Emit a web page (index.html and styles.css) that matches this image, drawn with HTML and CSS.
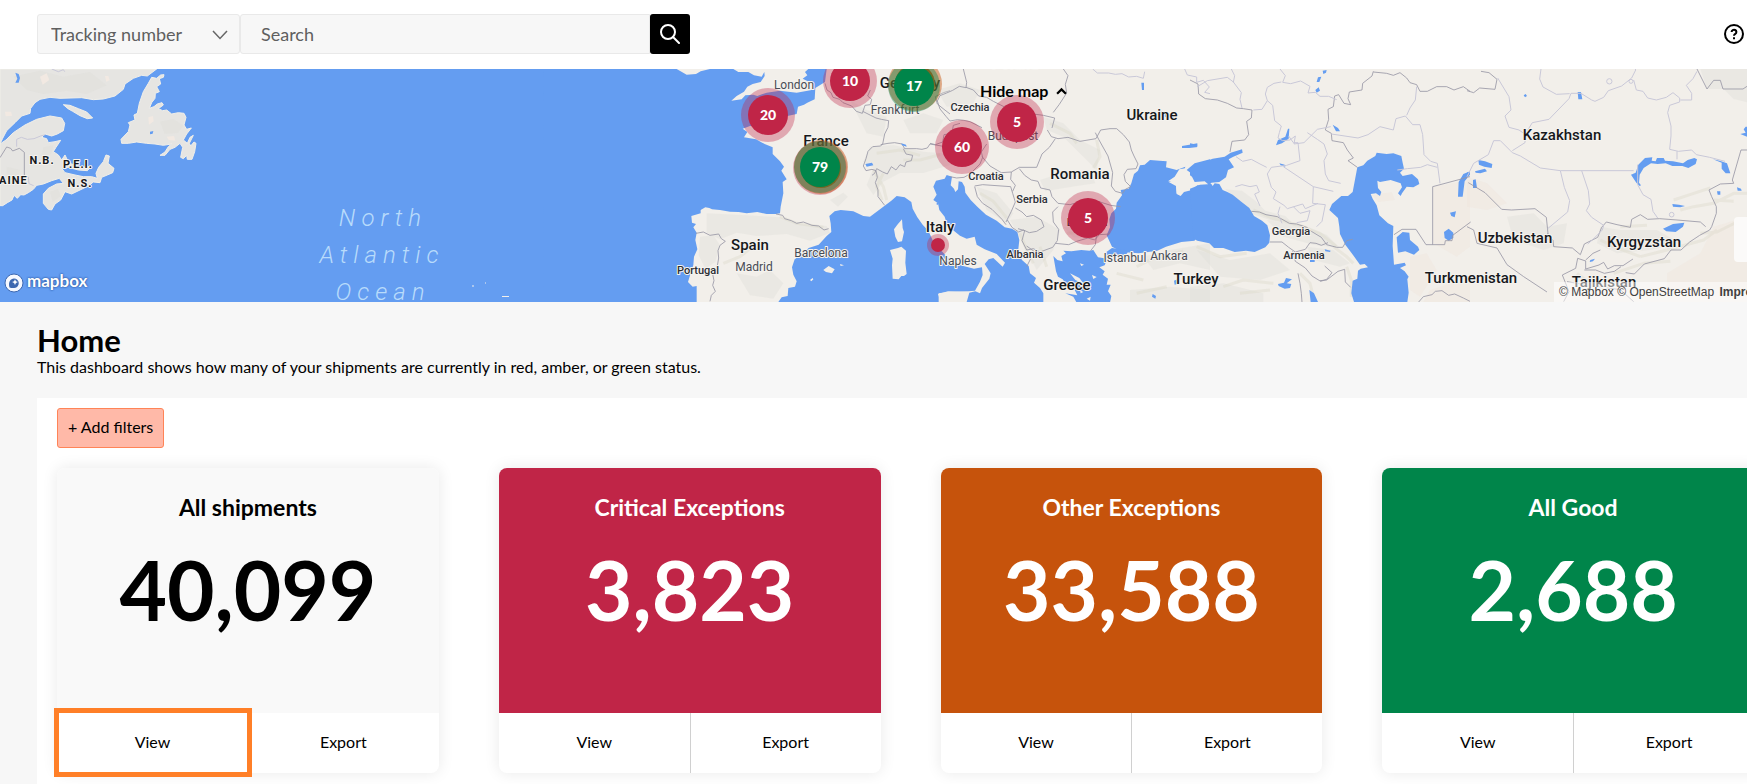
FILE: index.html
```html
<!DOCTYPE html>
<html lang="en">
<head>
<meta charset="utf-8">
<title>Home</title>
<link rel="stylesheet" href="styles.css">
</head>
<body>
<header class="topbar">
  <form class="search" role="search">
    <div class="search-type">
      <select class="search-select" aria-label="Search by">
        <option>Tracking number</option>
      </select>
      <svg class="search-chevron" viewBox="0 0 16 10" aria-hidden="true"><path d="M1 1l7 7.500 7-7.500"/></svg>
    </div>
    <input class="search-input" type="text" placeholder="Search" aria-label="Search">
    <button class="search-button" type="button" aria-label="Search">
      <svg viewBox="0 0 20 20" aria-hidden="true"><circle cx="8" cy="8" r="7"/><path d="M13 13l6 6"/></svg>
    </button>
  </form>
  <button class="help" type="button" aria-label="Help">
    <svg viewBox="0 0 20 20" aria-hidden="true"><circle cx="10" cy="10" r="9"/><path d="M7.600 8a2.400 2.200 0 1 1 3.700 1.800c-.9.600-1.300.9-1.300 1.900"/><path d="M10 13.300v1.900"/></svg>
  </button>
</header>

<section class="map" aria-label="Shipment map">
  <svg class="map-canvas" viewBox="0 0 1747 233" preserveAspectRatio="xMidYMid slice">
    <rect class="water" width="1747" height="233"/>

    <!-- Eastern Canada and Maine -->
    <g transform="translate(0 -9) scale(.33333)">
      <path class="land-cool" d="M0 27H470L442 48 425 46 400 55 375 72 370 88 345 108 310 117 280 119 245 113 180 115 150 112 120 118 105 128 92 145 90 160 65 168 45 188 20 212 8 235 0 252 18 240 40 218 75 195 110 178 150 168 185 174 194 190 190 212 172 222 155 228 135 222 125 232 140 236 145 248 165 245 182 241 168 262 160 275 175 285 185 300 195 285 203 302 215 312 250 322 275 318 262 332 235 330 205 322 185 325 195 338 225 345 250 350 275 350 292 355 288 340 296 322 310 305 318 285 328 288 324 310 342 325 338 338 322 345 305 352 300 368 280 366 265 378 240 390 215 402 195 395 182 420 165 432 155 450 145 448 130 430 130 402 145 385 170 372 190 370 178 355 155 362 130 372 110 376 100 388 85 398 72 405 62 404 52 415 42 406 36 420 22 428 8 437 0 437Z"/>
      <path class="land-cool" d="M190 134L210 136 235 146 260 156 278 174 262 176 240 167 218 154 204 146ZM470 55L482 45 492 44 490 52 478 56 482 72 470 80 478 95 466 100 465 115 455 128 448 145 462 140 472 132 486 128 490 135 475 146 488 152 500 150 515 162 535 158 552 160 558 172 552 195 560 208 574 204 560 222 550 240 562 250 570 232 580 226 568 250 572 258 582 246 588 250 584 275 576 298 562 298 560 286 550 296 542 292 548 262 540 250 525 262 510 268 495 286 480 286 495 276 505 260 515 252 490 256 465 252 440 250 410 246 385 250 365 250 363 238 385 215 390 195 385 188 405 180 402 165 412 160 418 130 430 95 445 70 455 52Z"/>
      <path class="shade" d="M40 50l80-18 70 18 80-14 50 40-60 26-60-10-70 10-50-12zM480 185l40-8 30 20-16 22-40 2zM150 395l24-8 8 22-24 16zM130 262l30-6-6 26-30 8zM20 320l40 10-6 40-34 6z"/>
      <path class="warm" d="M120 50l20-10 8 20-20 14zM445 172l14-4 2 16-14 10zM15 155l18 0 4 12-20 2zM315 48l10 0 4 12-10 6zM500 230l22-2 4 14-20-2z"/>
      <path class="border-soft" d="M155 27l20 8 15-6 4 6M50 260v-22l14-6 18 6 20-2 20-8 14-4M73 345l12 6 2 20 14 6"/>
      <path class="border" d="M0 293l20-32 12 4 6 8 20-8 15 12v68"/>
      <path class="water" d="M46 38l10 4 4 12-4 14-10 0 6-12zM450 215l10-2-2 8-8 2z"/>
    </g>

    <!-- Azores -->
    <path class="isle" d="M472 217h2M485 214h1M502 227.500h7"/>

    <!-- Europe and Asia -->
    <rect class="land" x="676" width="1071" height="233"/>
    <g transform="translate(670 -9) scale(.33333)">
      <path class="shade" d="M110 460l90 4 130 8 60 20 80 6 10 20-60 24-70-20-90 6-60-10-50 20-40-20zM90 530l40-4 20 30-14 50-30 20-20-40zM200 640l60 10 40-20 40 40-30 46-70-10zM480 420l40-22 14 12-30 30zM600 260l70-5 90 20 80 6v34l-80 24-70 0-50 26-30 40-20-30 20-50-30-20zM540 120l50 30 60 20-10 60-50-10zM690 560l18 10-4 60-20 0zM700 180l60-20 60 20-20 40-80 0z"/>
      <path class="relief" d="M330 470l50 20 80 12M610 330l30 50 10 40M620 280l70-10 60 16M160 610l50-20 30-24M640 340l-20 40 16 40M700 300l50 0 60-16"/>
      <path class="water" d="M-380 27H20L50 44 78 42 92 34 120 27H190L205 36 235 36 252 46 275 50 283 36 284 48 272 66 248 72 232 80 222 95 200 108 184 122 215 118 226 106 250 104 262 108 290 98 330 92 380 98 425 90 432 74 418 66 398 56 412 46 405 36 415 27H470L465 66 436 84 434 118 412 128 402 134 384 140 380 162 352 168 330 170 340 188 296 196 240 198 218 206 232 216 222 232 258 238 284 252 308 262 308 282 330 304 342 320 334 332 350 358 338 366 340 400 332 440 330 460 318 462 290 462 262 456 230 460 206 456 180 455 150 450 126 448 118 444 106 442 92 450 92 460 64 468 66 488 78 492 70 502 80 518 76 540 82 568 72 590 70 615 62 640 54 666 68 680 80 678 80 726H-380Z"/>
      <path class="water" d="M325 726L335 712 353 708 355 684 375 680 380 664 370 644 366 622 374 598 400 580 416 564 446 554 470 528 484 516 482 490 478 468 494 454 512 450 550 454 580 468 600 470 616 458 640 440 664 422 680 408 704 412 724 426 728 446 742 472 758 494 775 512 790 545 812 570 840 600 880 618 912 626 936 622 938 645 930 665 915 692 895 694 840 695 806 700 806 726Z"/>
      <path class="land" d="M696 478l2 26 4 12-6 28-12 2-8-16-4-22 10-14zM694 560l14 12-2 36 4 34-8 6-8 0-8 10-18-2-2-40 2-20-8-26 24-6zM460 630l16-12 18 10-8 12-18-4zM420 660l8-6 2 4-6 6zM510 612l12 4-10 2zM804 702l30-8 60 2-4 30H812Z"/>
      <path class="border" d="M318 462l20 4 6 10 20 6 16 8 20-4 26 10 20 2 16 12 14-4M78 520l22-4 20 10 26-4 8 14 12 8-16 12-6 16 2 22-6 36-12 12 4 20-4 14 8 18-12 12-4 18M465 70l6 20 12 8 6 14 20 6 10 10 26 10 14 16 18 6 8-24 16-2 4-16-12-10 8-18M578 154l16 8 24 12 16 4 22 4-2 20-10 20-6 30-6 6-24 2-14 14-6 22-8 22 8 14 18-4 12 4 4 20-6 16 8 22 0 20 20 26M632 254l22-4 20-2 22 4 8 14 36 0 16 2 16-4 8-12 46 8M700 266l8 16 20 4-4 16-16 4-4 14-14-6-12 16-14-10-12 22-14-6-18-10-6 14-8 6M840 92l-20 6-24 12 6 22 20 16 18 14"/>
      <path class="water" d="M586 312l20-4 4 8-20 4zM694 250l14 4 2 6-14-4zM800 428h4v6h-4z"/>
    </g>

    <g transform="translate(930 -9) scale(.33333)">
      <path class="shade" d="M340 170l60 20 50 50 60 30-10 60-40-40-60-60-50-20zM330 360l60-20 90-10 16 40-70 10-80 14zM140 380l60 20 50 60-20 30-60-40zM240 480l80-10 70 40-20 60-50 60-30-60zM400 500l70 10 40-10-20 36-60-4zM20 90l70-20 60 20-20 40-80 10zM640 590l80-20 120-20v80l-90-20-80 20zM600 690l120-10 120 10v36H600z"/>
      <path class="relief" d="M360 190l60 30 20 30M500 240l10 50-20 34M150 400l40 24 40 50M270 520l20 50 20 40M330 560l20 60M410 520l70-4M620 620l60-30 80-16M560 640l80 20M620 700l90-20"/>
      <path class="water" d="M90 527L64 506 50 490 44 470 28 450 24 430 10 420 20 404 10 380 18 362 44 356 50 345 66 350 62 376 72 386 76 396 84 388 86 364 96 366 104 380 106 398 122 420 142 440 168 464 200 482 224 502 246 506 262 516 268 540 264 576 276 600 296 618 300 640 318 654 312 668 330 684 340 700 340 726H110L118 698 136 694 150 700 156 684 178 656 182 640 164 612 176 598 190 594 218 620 225 608 200 582 164 568 140 554 134 530 110 536Z"/>
      <path class="water" d="M370 588l12 12 16 4-4-16 14-8-8-8 24 2 30-4 24 2 12-2 14 22 28 4-8 20-16 6 16 12-6 10 16 12-4 18 12 0-8 20 10 14-4 20H440l-10-18-24-10 36 6-12-24-22-10-10-14-14-8-6-16z"/>
      <path class="land" d="M420 640l28 14 14 18-26-12zM450 610l12 4-8 4zM486 645l14 6-10 6zM450 690l10 6-8 4zM470 716l12-6-2 12z"/>
      <path class="water" d="M840 378l-38-2-16 14-24 6-10 12-12-6-2-24-22-12 22-8 24-24 4-14-26 10-32-8 2-18-22-2-28-2-16 14-14 2-6 16-12 10-8 28-8 16-24 4 4 16-16 22-2 18-14 14-6 18 2 24-10 24 16 34 30 16 50 4 56-8 26-12 46-14 40-4z"/>
      <path class="land" d="M714 364l20-14 14-22 22-4 8 14 16 8 2 22-12 12-26 10-8 16-10-6-2-30-10-6z"/>
      <path class="water" d="M526 578l20-14 26 4 24 4-8 12-30 6-22 0zM770 330l24-20 46-12v48l-20 12-28-12zM634 68h8v22h-6zM688 152l20 4 24 16-4 6-20-6-18-10zM756 258l22-4 24-4v10l-24 4-22 0zM668 702l10 6-2 8-10-6zM732 662l10-4 0 14-8 2z"/>
      <path class="border" d="M100 27l10 40-2 16-20-4-20 12-18 8-20 8-8 16 8 24 18 22 12 14 22-4 20 2 18 4 36 18M108 82l22 8 16 18 24 4 20 12 60 30 90 12 34 8-8 30M400 27l14 20-8 26 4 26-22 34-18 24M0 250l16 4 22-8 4-22 24-4 4-24 20-6M60 350l20 4 22-2 18-10 30-30 8-20-4-16 16-24M156 290l24 28 34 20 30-2 24-14 52 0 16-40 22-20 18-26M352 210l12 20 20 6 30-4 36 12 48-8 14-26 28-4 20 0 20 18 18 22 6 24 8 18 12 24-6 14-26 2-10 16 4 20 16 16-16 8-8 12-22-6-12-16 4-40-14-50-28-50-10-20M134 378l24-4 84 6 6 20 8 26-12 28-16 32M134 380l8 30 16 20 28 18 30 30 12 16M244 336l-2 22 14 18-8 18M268 326l16 20 20 14 20 4 8 20 28 6 6 20 18 20 36 4 20-6M256 444l20 12 14 14 20-4 24 14 8 20-22 14-22 4-18-8-14 6-20-14-14-22M384 440l-16 16 2 30 16 22-4 34-14 20-38 14-20-10-20 4-14-28 8-30-20-6M376 550l40 4 24-10 34-10 20 6 14-16 32-2M500 524l-4 30-14 18M290 620l12-24 10-22-22-16M436 432l36 8 32-16 38 12 30 4"/>
      <path class="border-soft" d="M488 27l14 12 34 0 20 4 20-2 20 10 24-2 20 6 4-20M764 27l8 18 28 6 0 16 20-6 18 20-14 16 16 4"/>
    </g>

    <g transform="translate(1190 -9) scale(.33333)">
      <path class="warm-soft" d="M730 380l110-20v200l-40 30-70-40zM660 590l50-10 30 50-50 80-30-20zM545 406l60-10 10 24-50 6zM720 690l120-40v76H700z"/>
      <path class="shade" d="M106 388l50 4 40 30 30 30 60 16 20 20-60-6-60-20-40-40zM230 480l100 14 80 30 40 40-80-10-90-24zM20 570l100 30 120-20 60 50-90 30-120-10zM350 560l80 10 50 40-30 10-80-20zM0 680l100-10 120 30v26H0z"/>
      <path class="relief" d="M190 450l60 26 80 20 60 24 50 40M250 470l70 26M430 560l40 30 20 20M20 560l70 30 80-10M100 680l60-20 90 10M330 640l30 30 10 40M470 620l14 40 0 50M150 700l90-10"/>
      <path class="water" d="M0 328l34-20 34-12 36-6 18-12 34-10 2 10-28 12-14 8 16 24-18 8-6 22-20 14-24 2-6 8-14-12-30 2-8-16-6-4zM0 386l30-12 34-2 4 6 6-8 14 2 10 18 14 6 16 8 24 20 26 20 14 24 24 14 16 14 8 30-2 22-12 14-32 14-26-4-34 4-34-12-28 0-14-14-36-8-12-6z"/>
      <path class="water" d="M502 322l18-6 12-14 24-14 4-10 30 4 20-2 24 8 4 20 4 18-12 12 8 10 28-6 18 16 4 14-18 10-20-2-14 20-4 8-8-8 12-18-4-12-30-10-32 6-8-4 2 22 10 12-4 12-12-8-16 2 6 14 12 20 8 30 26 24 16 8-2 60 4 56 32-6 4 8-18 8 14 10 12 16-4 8 4 40-4 28H492l-8-26 4-38 14-6 2-24 8-6 22-4-10-10-14 2-26-36-18-24-16-32-2-22-4-26-26-24 8-18 14-12 14-12 20 0 14-12zM620 532l18-16 20 2 2 22 24 20 4 10-16 14-26-10-22 4z"/>
      <path class="water" d="M264 240l22-10 8-24h4l-2 30-20 14-18 6zM268 310l16 4 2 6-14-4zM428 194l16 10 6 10-12 0zM384 52l10-2-6 16-8 0zM398 32l12-2-2 8-8 4zM376 90l10-8 4 10-10 6zM0 250l22 4-2 8-20 0zM264 672l18-4 6-14 18 4-16 12 14 2-4 12-16 2-18-8zM358 690l14 10 12 26-22 0zM360 600h14v6h-14zM404 568l18 4-2 4-14-2zM804 410l2-44 14-24 20-8v10l-16 20-6 46zM780 458l18-4-4 18-10-4zM762 516l14-10 14 12 0 16-14 8-12-8z"/>
      <path class="border" d="M0 60l24 12 2 30 20 14 36 4 30 10 28 14 20 2 26 4-2 24-14 10 6 40-12 16-38 4-6 32M550 34l-4 14-28 22-2 20-38 6-4 20 8 18-20-4-16-26-12 4-4 32-16 8 2 30-10 32 18 10 2 22 34 6 12 22 18 24-16 8 28 20M550 36l40 4 20 6 20-8 20 16 10 14 20 6 10 20 22 0 28-14 30 0 22 10 28-10 20 14M184 454l24 2 20 8 34 6 36 20 22 2 30 10 14 12 30 18 16 22 30 8 18 0 12-20 18-4M240 546l36 0 20 16 20 14 30-8 14-20 18 2 16 6 20-8M308 574l8 30 30 20 20 24 26 16 18-6 16-20-22-20M324 640l6 30 4 30 2 26M390 662l20-2 34-26 20-6 2 38 16 16M728 380v174M728 380l112-30M612 524l24-16 42 0 30 46 56 0 2-12 20 0 2-16 54-40M686 726l14-16 26-6 10-10 20-2 20 14 18-4 26 12 20 10"/>
      <path class="border-soft" d="M22 80l30-18 60-10 18 14 24 32-4 20 6 26M124 27l10 20-4 20M190 150l26-2 16-26-6-20 6-20 20-12 22-4M270 27l16 20-8 20 24 4 30-8 28 16-6 20 22-2 14 12 26 0 24 10M232 122l16 14 6 46 20 16-6 20-4 16 14 8 22-2 16-12-4 24 30-4 40-40 40-8M296 228l14 20 14 0 6 54-40 14-46 6-12 20 12 40 14 14-8 20 32 20 10 10 46-14 8 14 38-16M352 218l30 20 20 14 10 30-10 20 4 40 10 20 36 8M138 290l20 14 26-6 26 14 20 10M280 320l90 60 60 14M370 380l-2 50 38 4-10 50-16 16M136 380l20-6 24 6 20-4 8 20-14 6 16 36M270 440l-6 20 12 30M310 440l20 20 30-8-8 30-32 6M424 222l80 12 30-10 36-24 40 10 8-34 28-8 22 26 22 0 8 30 4 60 20 20 20 6 8 60M622 330l30-4 40-4 20-8 30 8M680 80l-4 40-16 24-10 22"/>
    </g>

    <g transform="translate(1467 -69) scale(.33333)">
      <path class="shade" d="M700 207h140v100l-40-10-30-30-50 0zM120 650l80-10 40 40 60-10-10 60-60 20-90-30zM400 680l60 10 110 0 70 40-90 20-100 10-60-30z"/>
      <path class="warm-soft" d="M0 530l60 20 60 60-60 20-60-10zM740 680l100-30v220l-240 0 0-50 100-60z"/>
      <path class="relief" d="M640 630l40-10 60-10 60-30 40 0M620 600l60-20 50-16M400 720l40 20 80 30M520 770l80-20 110-30 40-30M440 820l90-30 80-6M330 820l40 30 40 14M700 700l50-4 60-30M460 680l80-4M740 600l60 4"/>
      <path class="water" d="M492 524l14-6 8-24 20-20 22-2-2 10 12 2 4-10 20 0 4 8 24 2 30 6 14-10 20-6 8 4-4 14-22 12-18-6-30 0-20-8-24 2-20-2-22 14-12 20-2 24 6 8-4 2-10-10zM588 686l30-14 34-4-4 12-22 16-28-2zM738 478l20 4 22 8 10 30-14 0-12-14 0-18zM332 276h10l4 22-12 0zM170 286l6-4 4 6-6 4zM616 612l20 2 18 4-14 4-22-2zM34 480l20 4 22 8-2 12-22-4-16-6zM24 514l30-8 6 8-20 6-14-2zM18 540l8-2 4 26-12 0zM0 516l6 0-2 6zM836 380l4 0v30l-20-8 16-4-6-10zM750 574h10v10h-8zM810 562l12 4 2 6-12 0zM370 780l14-4-6 8-10 2z"/>
      <path class="border" d="M0 272l20 6 18-14 46 4 6-30-24-20-24-4M690 207l30 60 20-26 20 0 8 26 60 0 12-8M840 450l-18 0-26 90 4 10-40 2-34 18 8 20 14 30 0 20-14 40-6 10-30 16-30 20-26 24-30 0-20 26-60 16-30 30-26-4M716 680l-16-14-70-6-52-4-36 2-22-14-26 14-4 24-40-8-32-8-14 16-12 30-40 20-12 32-24-20-56-4-2-20-14-10-6-58-34-26-70 4-30-2-50-50-50-30M242 700v20M0 680l20 10 10 40 60 14 30 50 50 36 70 46M290 905l16-30-20-50 40-20 6-30 24 8 0 24 40-12 14-8 12 20 20-10 26 0 30-20M352 810l34 0 26 10 30-6 20-14M356 780l22-20 22-10M300 845l60 10 100 14 40 36"/>
      <path class="border-soft" d="M0 530l20-40 44-26 16-42 20 0 30 30 6 6 24 10 60 36 60 8H500M136 452l38-24 2-24-20-14-30-8-12-34 18-18-6-40-34-56M176 400l20-32 50-10 60-62 6-16 30 0 32 20 10 4 26-12 14-20 40-14 30-24 12-24-4-10M222 207l-4 30 10 24 40 22 40-2M500 240l8 30 20 4 14 20 26 6 30-8 20-14 20 16 0 12-30 10-6 22 10 40 0 30-4 40 26 6 40-4 14 14 40 8 46 12M640 300l34 0 0-20-16-24 20-20 12-22M630 454v24M280 512l12 50 16 40-6 34-60 50M344 512l20 60 4 40-10 20 16 20 36 24-4 14-30 30-14 12M512 494l0 60 16 30 24 14 6 36 14 20"/>
      <circle class="border-soft" cx="427" cy="244" r="8"/><circle class="border-soft" cx="492" cy="244" r="6"/><circle class="border-soft" cx="614" cy="644" r="7"/>
    </g>

    <g class="label-ocean">
      <text x="383" y="157">North</text><text x="382" y="194">Atlantic</text><text x="383" y="231">Ocean</text>
    </g>
    <g class="label-province">
      <text x="42" y="95">N.B.</text><text x="78" y="99">P.E.I.</text><text x="80" y="118">N.S.</text><text x="8" y="115">MAINE</text>
    </g>
    <g class="label-city">
      <text x="794" y="20">London</text><text x="895" y="45">Frankfurt</text><text x="821" y="188">Barcelona</text><text x="754" y="202">Madrid</text><text x="958" y="196">Naples</text><text x="1013" y="71">Budapest</text><text x="1125" y="193">Istanbul</text><text x="1169" y="191">Ankara</text>
    </g>
    <g class="label-small">
      <text x="698" y="205">Portugal</text><text x="970" y="42">Czechia</text><text x="986" y="111">Croatia</text><text x="1032" y="134">Serbia</text><text x="1087" y="157">Bulgaria</text><text x="1025" y="189">Albania</text><text x="1291" y="166">Georgia</text><text x="1304" y="190">Armenia</text>
    </g>
    <g class="label-country">
      <text x="910" y="19">Germany</text><text x="826" y="77">France</text><text x="750" y="181">Spain</text><text x="940" y="163">Italy</text><text x="1015" y="0">Poland</text><text x="1152" y="51">Ukraine</text><text x="1080" y="110">Romania</text><text x="1067" y="221">Greece</text><text x="1196" y="215">Turkey</text><text x="1471" y="214">Turkmenistan</text><text x="1562" y="71">Kazakhstan</text><text x="1515" y="174">Uzbekistan</text><text x="1644" y="178">Kyrgyzstan</text><text x="1604" y="218">Tajikistan</text>
    </g>

    <g class="pins">
      <circle class="halo-red" cx="768" cy="46" r="27"/><circle class="red" cx="768" cy="46" r="20"/><text x="768" y="51">20</text>
      <circle class="halo-red" cx="850" cy="12" r="27"/><circle class="red" cx="850" cy="12" r="20"/><text x="850" y="17">10</text>
      <circle class="halo-amber" cx="915" cy="15" r="27"/><circle class="amber" cx="915" cy="15" r="20"/><circle class="halo-green" cx="914" cy="17" r="26"/><circle class="green" cx="914" cy="17" r="20"/><text x="914" y="22">17</text>
      <circle class="halo-red" cx="820" cy="99" r="27"/><circle class="halo-amber" cx="821" cy="98" r="27"/><circle class="amber" cx="821" cy="99" r="20"/><circle class="halo-green" cx="820" cy="98" r="26"/><circle class="green" cx="820" cy="98" r="20"/><text x="820" y="103">79</text>
      <circle class="halo-red" cx="962" cy="78" r="27"/><circle class="red" cx="962" cy="78" r="20"/><text x="962" y="83">60</text>
      <circle class="halo-red" cx="1017" cy="53" r="27"/><circle class="red" cx="1017" cy="53" r="20"/><text x="1017" y="58">5</text>
      <circle class="halo-red" cx="1088" cy="149" r="27"/><circle class="red" cx="1088" cy="149" r="20"/><text x="1088" y="154">5</text>
      <circle class="halo-red" cx="938" cy="176" r="11"/><circle class="red" cx="938" cy="176" r="7"/>
    </g>
  </svg>
  <button class="hide-map" type="button">Hide map
    <svg viewBox="0 0 10 7" aria-hidden="true"><path d="M1 6l4-4 4 4"/></svg>
  </button>
  <a class="mapbox" href="#">
    <svg viewBox="0 0 20 20" aria-hidden="true"><circle class="mapbox-ring" cx="10" cy="10" r="9"/><path class="mapbox-drop" d="M5.500 14.500c-1-3-.5-6 1-7.500a4.700 4.700 0 0 1 7 6.500c-1.500 1.600-5 2-8 1z"/><path class="mapbox-star" d="M11 6.200l.9 2 2 .9-2 .9-.9 2-.9-2-2-.9 2-.9z"/></svg>
    <span>mapbox</span>
  </a>
  <div class="map-control"></div>
  <div class="attribution">
    <a href="#">© Mapbox</a> <a href="#">© OpenStreetMap</a> <a class="improve" href="#">Improve this map</a>
  </div>
</section>

<main class="content">
  <h1 class="title">Home</h1>
  <p class="intro">This dashboard shows how many of your shipments are currently in red, amber, or green status.</p>
  <section class="panel">
    <button class="add-filters" type="button">+ Add filters</button>
    <div class="cards">
      <article class="card">
        <div class="card-body">
          <h2 class="card-title">All shipments</h2>
          <p class="card-count">40,099</p>
        </div>
        <div class="card-actions"><button class="highlighted" type="button">View</button><button type="button">Export</button></div>
      </article>
      <article class="card">
        <div class="card-body critical">
          <h2 class="card-title">Critical Exceptions</h2>
          <p class="card-count">3,823</p>
        </div>
        <div class="card-actions"><button type="button">View</button><button type="button">Export</button></div>
      </article>
      <article class="card">
        <div class="card-body other">
          <h2 class="card-title">Other Exceptions</h2>
          <p class="card-count">33,588</p>
        </div>
        <div class="card-actions"><button type="button">View</button><button type="button">Export</button></div>
      </article>
      <article class="card">
        <div class="card-body good">
          <h2 class="card-title">All Good</h2>
          <p class="card-count">2,688</p>
        </div>
        <div class="card-actions"><button type="button">View</button><button type="button">Export</button></div>
      </article>
    </div>
  </section>
</main>
</body>
</html>
```
FILE: styles.css
```css
* { box-sizing: border-box; }
body {
  margin: 0;
  overflow: hidden;
  background: #f7f7f7;
  color: #000;
  font: 16px/20px Lato, "Open Sans", sans-serif;
}
h1, h2, p { margin: 0; }
button, input, select { font: inherit; color: inherit; }
button { border: 0; padding: 0; background: none; }
a { color: inherit; text-decoration: none; }

.topbar {
  display: flex;
  align-items: center;
  justify-content: space-between;
  padding: 14px 3px 15px 37px;
  background: #fff;
}
.search { display: flex; width: 653px; height: 40px; font-size: 18px; color: #5f5f5f; }
.search-type { position: relative; flex: 0 0 203px; display: flex; }
.search-select {
  flex: 1;
  appearance: none;
  padding: 0 13px;
  border: 1px solid #e9e9e9;
  border-radius: 3px;
  background: #f7f7f7;
}
.search-chevron { position: absolute; right: 12px; top: 16px; width: 16px; height: 10px; fill: none; stroke: #666; stroke-width: 1.5; pointer-events: none; }
.search-input {
  flex: 1;
  min-width: 0;
  padding: 0 20px;
  border: 1px solid #e9e9e9;
  border-radius: 3px 0 0 3px;
  background: #f7f7f7;
}
.search-input::placeholder { color: #5f5f5f; opacity: 1; }
.search-button { flex: 0 0 40px; display: grid; place-items: center; border-radius: 3px; background: #000; }
.search-button svg { width: 20px; height: 20px; fill: none; stroke: #fff; stroke-width: 2; stroke-linecap: round; }
.help { width: 20px; height: 20px; }
.help svg { display: block; width: 20px; height: 20px; fill: none; stroke: #000; stroke-width: 2; }

.map { position: relative; height: 233px; overflow: hidden; }
.map-canvas { display: block; width: 100%; height: 100%; }
.water { fill: #649df1; }
.land { fill: #f2efea; }
.land-cool { fill: #e6e5e2; stroke: #f1efe9; stroke-width: 3; }
.isle { stroke: #f2efea; }
.shade { fill: #dcdcd6; opacity: .35; }
.warm { fill: #f2e9e2; }
.warm-soft { fill: #efe0d8; opacity: .3; }
.relief { fill: none; stroke: #d9d7c8; stroke-width: 9; stroke-linejoin: round; opacity: .38; }
.border { fill: none; stroke: #9896a5; stroke-width: 2.5; stroke-linejoin: round; }
.border-soft { fill: none; stroke: #c9c8d8; stroke-width: 3; stroke-linejoin: round; }

.map-canvas text { font-family: Roboto, "Noto Sans", sans-serif; text-anchor: middle; }
.label-country, .label-city, .label-small, .label-province { paint-order: stroke; stroke: #f5f3ef; stroke-width: 2; stroke-linejoin: round; }
.label-country { font-size: 15px; font-weight: 500; fill: #16181c; }
.label-city { font-size: 12px; fill: #484c55; }
.label-small { font-size: 11px; font-weight: 500; fill: #2c2f35; }
.label-province { font-size: 11px; font-weight: 700; letter-spacing: 1px; fill: #16181c; }
.label-ocean { font-size: 24px; font-weight: 300; font-style: italic; letter-spacing: 6px; fill: #b8dbfb; }

.map-canvas .pins text { font: 900 14px Lato, sans-serif; fill: #fff; }
.red { fill: #c02547; }
.amber { fill: #c6530c; }
.green { fill: #00854a; }
.halo-red { fill: #c02547; opacity: .35; }
.halo-amber { fill: #c6530c; opacity: .45; }
.halo-green { fill: #00854a; opacity: .4; }

.hide-map {
  position: absolute;
  top: 12px;
  left: 980px;
  display: flex;
  align-items: center;
  gap: 8px;
  font-size: 16px;
  font-weight: 700;
}
.hide-map svg { width: 11px; height: 8px; fill: none; stroke: #000; stroke-width: 2; }
.mapbox {
  position: absolute;
  left: 4px;
  bottom: 8px;
  display: flex;
  align-items: center;
  gap: 3px;
  color: #fff;
  font-size: 17px;
  font-weight: 700;
  text-shadow: 0 0 2px #2f5aa6, 0 0 2px #2f5aa6;
}
.mapbox svg { width: 20px; height: 20px; }
.mapbox span { padding-bottom: 3px; }
.mapbox-ring { fill: #f5f8ff; stroke: #3d68b0; }
.mapbox-drop { fill: #3d68b0; }
.mapbox-star { fill: #fff; }
.map-control { position: absolute; right: 0; bottom: 40px; width: 13px; height: 45px; border-radius: 4px 0 0 4px; background: #fbfaf9; }
.attribution {
  position: absolute;
  left: calc(100% - 193px);
  bottom: 0;
  padding: 0 5px;
  background: rgba(255, 255, 255, .5);
  color: #404040;
  font: 12px/20px "Liberation Sans", Arial, sans-serif;
  white-space: nowrap;
}
.improve { margin-left: 2px; font-weight: 700; }

.content { padding: 21px 0 0 37px; }
.title { font-size: 31px; line-height: 34px; font-weight: 700; }
.intro { line-height: 20px; }
.panel { margin-top: 21px; padding: 10px 0 20px 20px; background: #fff; }
.add-filters {
  height: 40px;
  padding: 0 10px 2px;
  border: 1px solid #ff8457;
  border-radius: 3px;
  background: #ffb9a8;
}
.cards { display: grid; grid-template-columns: repeat(4, 1fr); gap: 60px; margin: 20px -17px 0 0; }
.card { border-radius: 8px; background: #fff; box-shadow: 0 0 16px rgba(0, 0, 0, .09); }
.card-body { height: 245px; padding-top: 24px; border-radius: 8px 8px 0 0; background: #f9f9f9; text-align: center; }
.card-title { font-size: 23px; line-height: 30px; font-weight: 700; }
.card-count { margin-top: 17px; font-size: 82px; line-height: 100px; font-weight: 700; }
.critical { background: #c02547; color: #fff; }
.other { background: #c6530c; color: #fff; }
.good { background: #00854a; color: #fff; }
.card-actions { display: grid; grid-template-columns: 1fr 1fr; height: 60px; }
.card-actions button { position: relative; padding-bottom: 2px; }
.card-actions button + button { border-left: 1px solid #d0d0d0; }
.highlighted::after { content: ""; position: absolute; z-index: 1; inset: -5px -4px -4px -3px; border: 5px solid #ff7f27; }
.card-actions .highlighted + button { border-left: 0; }
```
